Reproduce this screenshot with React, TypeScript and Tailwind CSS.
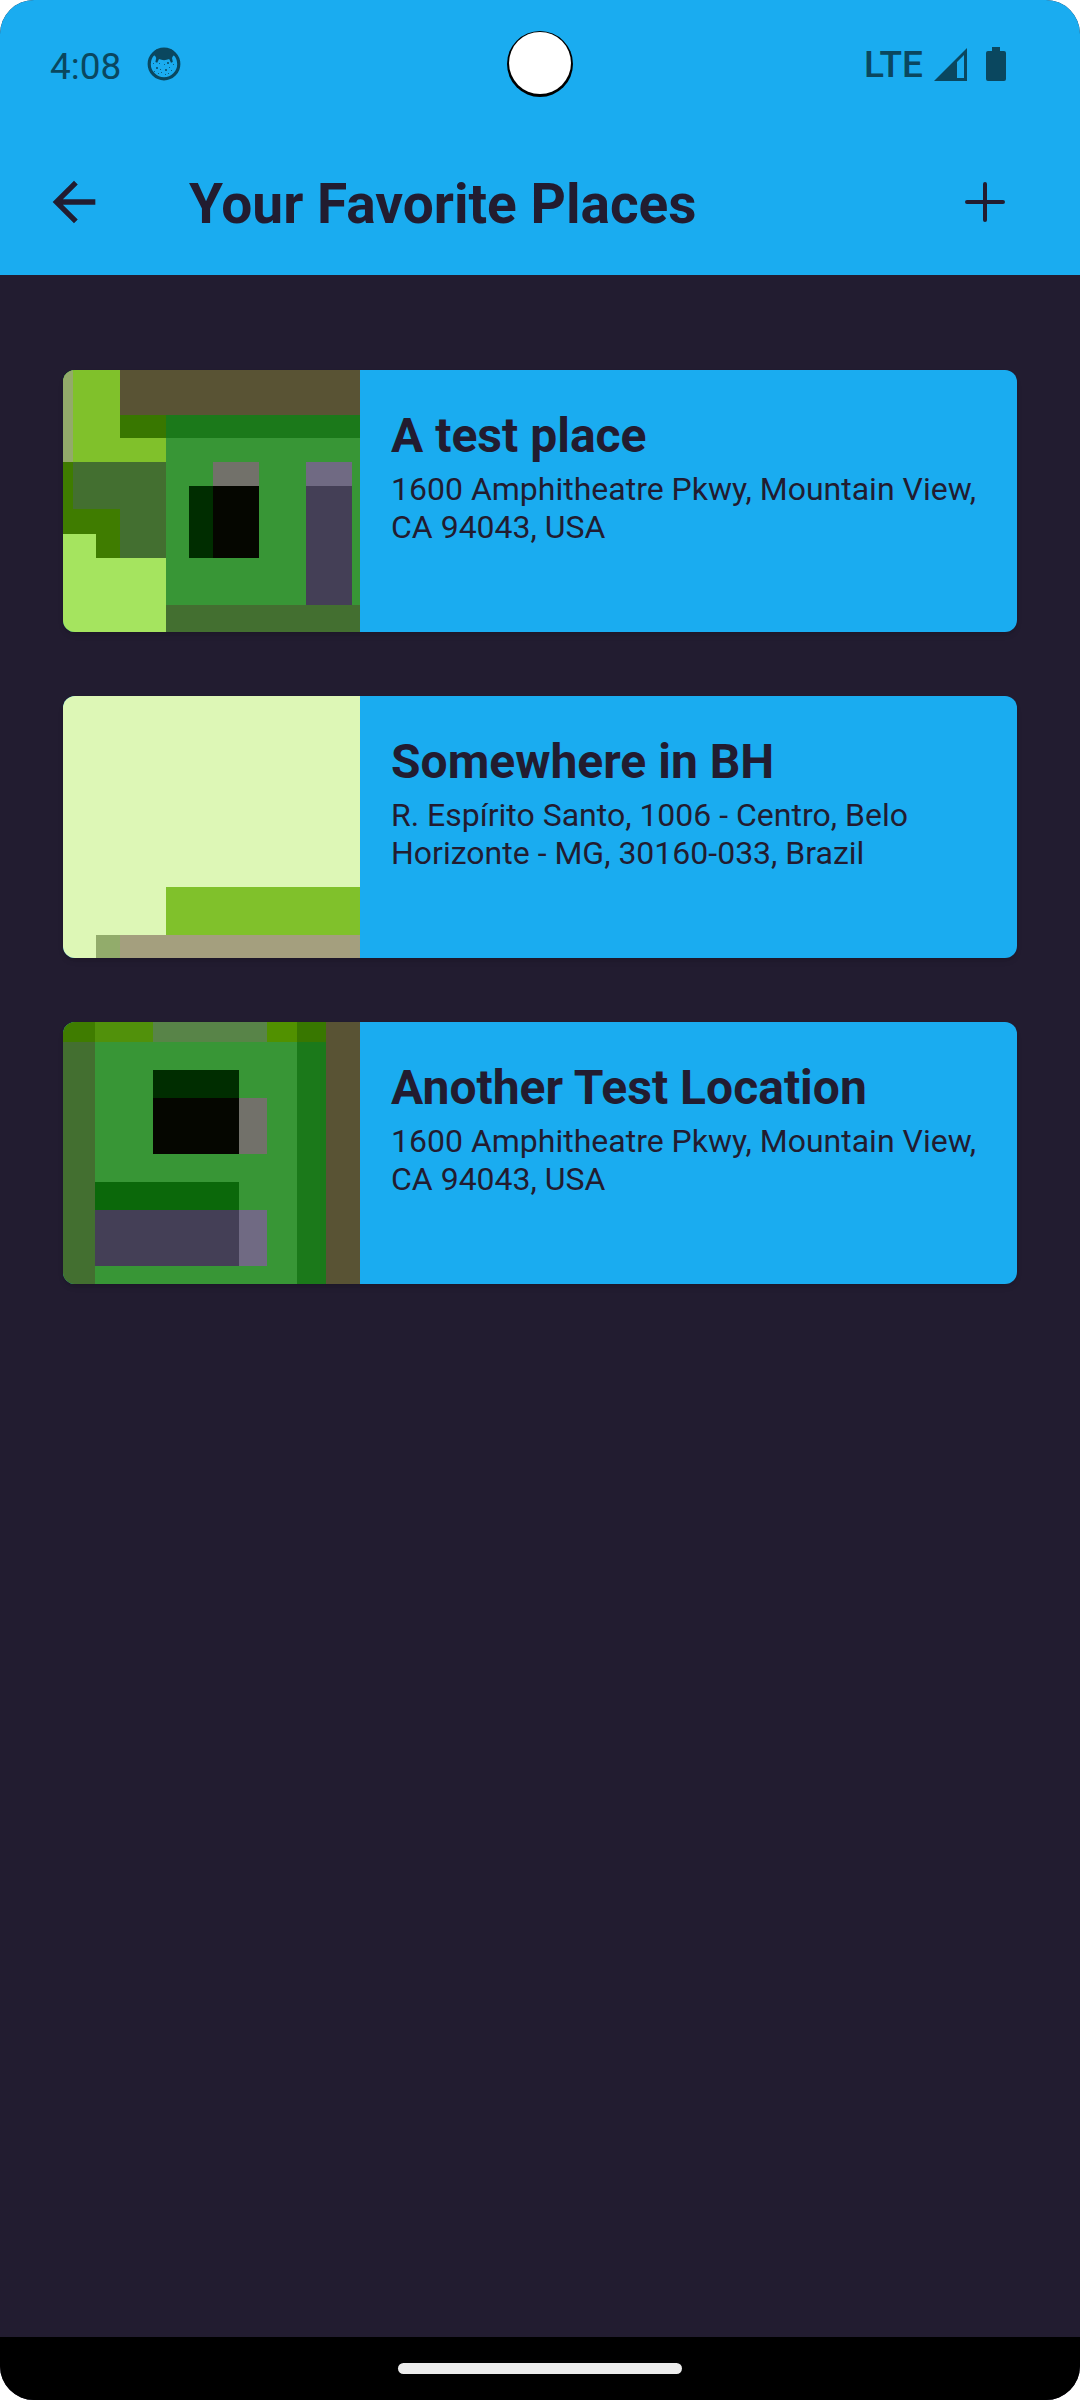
type Block = [x: number, y: number, width: number, height: number, color: string];

type Place = {
  title: string;
  address: string;
  base: string;
  blocks: Block[];
};

const places: Place[] = [
  {
    title: "A test place",
    address: "1600 Amphitheatre Pkwy, Mountain View, CA 94043, USA",
    base: "#389636",
    blocks: [
      [0, 0, 103, 92, "#80c12b"],
      [0, 0, 10, 92, "#93aa6a"],
      [57, 0, 240, 45, "#595334"],
      [57, 45, 46, 23, "#387700"],
      [103, 45, 194, 23, "#1b791a"],
      [0, 92, 103, 72, "#3f7c00"],
      [10, 92, 93, 47, "#436f30"],
      [57, 139, 46, 49, "#436f30"],
      [33, 164, 24, 24, "#3f7c00"],
      [0, 164, 33, 24, "#a5e45f"],
      [0, 188, 103, 74, "#a5e45f"],
      [150, 92, 46, 24, "#72716a"],
      [126, 116, 24, 72, "#002d00"],
      [150, 116, 46, 72, "#050600"],
      [243, 92, 46, 24, "#706a83"],
      [243, 116, 46, 119, "#443f56"],
      [103, 235, 194, 27, "#436f30"],
    ],
  },
  {
    title: "Somewhere in BH",
    address: "R. Espírito Santo, 1006 - Centro, Belo Horizonte - MG, 30160-033, Brazil",
    base: "#ddf7b6",
    blocks: [
      [103, 191, 194, 48, "#80c12b"],
      [33, 239, 24, 24, "#92ac6b"],
      [57, 239, 240, 24, "#a49f7e"],
    ],
  },
  {
    title: "Another Test Location",
    address: "1600 Amphitheatre Pkwy, Mountain View, CA 94043, USA",
    base: "#389636",
    blocks: [
      [0, 0, 32, 20, "#3f7c00"],
      [32, 0, 58, 20, "#51910b"],
      [90, 0, 114, 20, "#588448"],
      [204, 0, 30, 20, "#519100"],
      [234, 0, 29, 20, "#387700"],
      [0, 20, 32, 243, "#436f30"],
      [234, 20, 29, 243, "#1b791a"],
      [263, 0, 34, 263, "#595334"],
      [90, 48, 86, 28, "#002d00"],
      [90, 76, 86, 56, "#050600"],
      [176, 76, 28, 56, "#72716a"],
      [32, 160, 144, 28, "#0b680a"],
      [32, 188, 144, 56, "#443f56"],
      [176, 188, 28, 56, "#706a83"],
    ],
  },
];

function StatusBar() {
  return (
    <div className="relative flex h-32 items-center justify-between pr-[74px] pl-[50px] text-[#0a475f]">
      <div className="flex items-center gap-[26px]">
        <span className="pt-1 text-[37px] leading-none">4:08</span>
        <svg className="size-[34px]" viewBox="0 0 34 34" fill="currentColor" aria-hidden="true">
          <circle cx="17" cy="17" r="14.8" fill="none" stroke="currentColor" strokeWidth="3.2" />
          <path d="M5 7 10 2h14l5 5-3 2-1 2 .8 4-1.800.800-1.800-3.800C18.500 13.500 15.500 13.500 12 12l-1.800 3.800-1.800-.8.8-4-1-2z" />
          <g opacity=".75">
            <path d="M17 17h1v1h-1zM20 15h2v2h-2zM9 20h2v2H9zM13 22h1v1h-1zM18 22h2v2h-2zM22 20h1v1h-1zM12 16h1v1h-1zM6 16h1v1H6zM26 17h1v1h-1zM14 25h1v1h-1zM18 27h1v1h-1zM24 23h1v1h-1zM7 24h1v1H7zM11 26h1v1h-1zM21 26h1v1h-1z" />
          </g>
        </svg>
      </div>
      <div className="absolute top-[31px] left-1/2 size-[66px] -translate-x-1/2 rounded-full bg-black px-[2px] pt-px pb-[3px]">
        <div className="size-[62px] rounded-full bg-white" />
      </div>
      <div className="flex items-center">
        <span className="text-[37px] leading-none font-medium">LTE</span>
        <svg className="ml-[11px] h-[33px] w-[33px]" viewBox="0 0 33 33" fill="currentColor" fillRule="evenodd" aria-hidden="true">
          <path d="M33 0v33H0zM23 14v16h7V7z" />
        </svg>
        <svg className="ml-[19px] h-[34px] w-5" viewBox="0 0 20 34" fill="currentColor" aria-hidden="true">
          <path d="M6 0h8v4h4a2 2 0 0 1 2 2v26a2 2 0 0 1-2 2H2a2 2 0 0 1-2-2V6a2 2 0 0 1 2-2h4z" />
        </svg>
      </div>
    </div>
  );
}

function AppBar() {
  return (
    <div className="flex h-[147px] items-center pr-[63px] pl-[42px]">
      <button type="button" aria-label="Go back" className="flex size-16 items-center justify-center">
        <svg className="size-16" viewBox="0 0 24 24" fill="currentColor" aria-hidden="true">
          <path d="M20 11H7.830l5.590-5.590L12 4l-8 8 8 8 1.410-1.410L7.830 13H20v-2z" />
        </svg>
      </button>
      <h1 className="ml-[83px] flex-1 pt-1 text-[55px] leading-[62px] font-bold">Your Favorite Places</h1>
      <button type="button" aria-label="Add place" className="flex size-16 items-center justify-center">
        <svg className="size-16" viewBox="0 0 512 512" fill="none" stroke="currentColor" strokeWidth="32" strokeLinecap="round" aria-hidden="true">
          <path d="M256 112v288M400 256H112" />
        </svg>
      </button>
    </div>
  );
}

function PlaceCard({ place }: { place: Place }) {
  return (
    <li>
      <a href="#" className="flex min-h-[262px] overflow-hidden rounded-[12px] bg-[#1aacf0] shadow-md">
        <svg className="w-[297px] shrink-0" viewBox="0 0 297 262" preserveAspectRatio="xMinYMin slice" shapeRendering="crispEdges" aria-hidden="true">
          <rect width="297" height="263" fill={place.base} />
          {place.blocks.map(([x, y, width, height, color]) => (
            <rect key={`${x}-${y}-${width}`} x={x} y={y} width={width} height={height} fill={color} />
          ))}
        </svg>
        <div className="flex-1 px-[31px] pt-[38px]">
          <h2 className="text-[48px] leading-[56px] font-bold">{place.title}</h2>
          <p className="mt-[6px] text-[32px] leading-[38px]">{place.address}</p>
        </div>
      </a>
    </li>
  );
}

export default function App() {
  return (
    <div className="min-h-screen bg-white">
      <div className="flex min-h-screen flex-col overflow-hidden rounded-[34px] bg-[#221c30] font-['Roboto',sans-serif] text-[#221c30]">
        <header className="bg-[#1aacf0]">
          <StatusBar />
          <AppBar />
        </header>
        <main className="flex-1 px-[63px] pt-[95px]">
          <ul className="flex flex-col gap-16">
            {places.map((place) => (
              <PlaceCard key={place.title} place={place} />
            ))}
          </ul>
        </main>
        <footer className="flex h-[63px] justify-center bg-black pt-[26px]">
          <div className="h-[11px] w-[284px] rounded-full bg-[#ececec]" />
        </footer>
      </div>
    </div>
  );
}
